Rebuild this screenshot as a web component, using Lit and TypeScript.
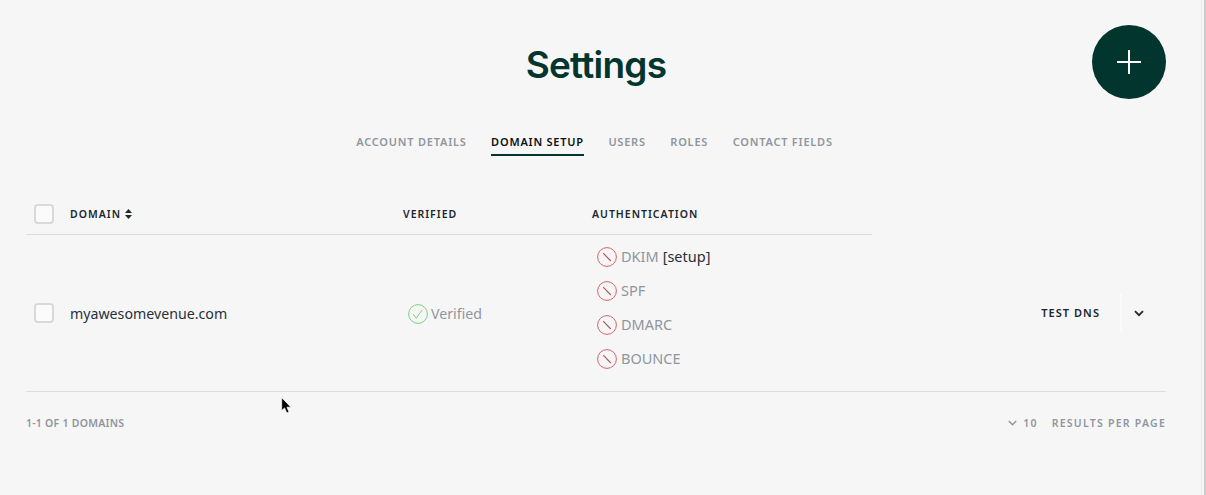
import { LitElement, html, css } from "lit";
import { customElement } from "lit/decorators.js";

const ban = html`<svg class="ico" viewBox="0 0 20 20" fill="none"><circle cx="10" cy="10" r="9.4" stroke="#d9636a" stroke-width="1"/><path d="M6.2 6.2 13.8 14" stroke="#b0555c" stroke-width="1.1"/></svg>`;
const check = html`<svg class="ico" viewBox="0 0 20 20" fill="none"><circle cx="10" cy="10" r="9.4" stroke="#7dd07f" stroke-width="1"/><path d="M5 10 8.3 14.2 14 6" stroke="#7dd07f" stroke-width="1"/></svg>`;

@customElement("app-root")
export class AppRoot extends LitElement {
  static styles = css`
    :host { display: block; height: 495px; background: #f6f6f6; position: relative; overflow: hidden;
      font-family: "Noto Sans", "Open Sans", sans-serif; color: #1c2530; }
    .edge { position: absolute; top: 0; right: 0; bottom: 0; width: 5px; box-sizing: border-box; background: #f7f7f7; border-left: 1px solid #ececec; border-right: 2px solid #cbcbcb; }
    .page { width: 1202px; box-sizing: border-box; padding: 0 36px 0 26px; display: flex; flex-direction: column; }
    h1 { margin: 0; padding-top: 42px; height: 93px; box-sizing: border-box; text-align: center; font-family: "Inter", sans-serif;
      font-weight: 600; font-size: 37px; line-height: 46px; letter-spacing: -0.75px; color: #03352f; }
    .fab { position: absolute; left: 1092px; top: 25px; width: 74px; height: 74px; border: 0; padding: 0; border-radius: 50%; background: #03352f;
      display: flex; align-items: center; justify-content: center; }
    .fab svg { width: 24px; height: 24px; }
    .tabs { display: flex; justify-content: center; gap: 24.5px; margin-right: 3px; padding-top: 41px; height: 61px; box-sizing: border-box; }
    .tab { font-size: 11px; font-weight: 600; letter-spacing: 0.78px; line-height: 16px; height: 22px; color: #8f979e; box-sizing: border-box; white-space: nowrap; }
    .tab.on { color: #0c1116; border-bottom: 2px solid #03352f; }
    .head, .row { display: grid; grid-template-columns: 44px 333px 189px 274px 1fr; align-items: center; }
    .head { width: 846px; grid-template-columns: 44px 333px 189px 280px; height: 41px; border-bottom: 1px solid #dedede; box-sizing: border-box; margin-top: 40px; }
    .th { font-size: 10.5px; font-weight: 600; letter-spacing: 1px; color: #20262e; display: flex; align-items: center; gap: 4px; white-space: nowrap; }
    .cb { width: 20px; height: 20px; margin-left: 8px; box-sizing: border-box; border: 2px solid #d9d9d9; border-radius: 4px; background: #fbfbfb; }
    .row { height: 157px; border-bottom: 1px solid #dedede; box-sizing: border-box; }
    .domain { font-size: 14.2px; color: #27303a; }
    .status { display: flex; align-items: center; gap: 3px; font-size: 14.2px; color: #8f979e; margin-left: 5px; }
    .auth { display: flex; flex-direction: column; gap: 10px; margin-left: 5px; padding-bottom: 12px; }
    .status.a { margin-left: 0; height: 24px; gap: 4px; font-size: 14.5px; }
    .setup { color: #27303a; }
    .ico { width: 20px; height: 20px; flex: none; margin-top: 2px; }
    .actions { display: flex; align-items: center; justify-content: flex-end; margin-right: 22px; }
    .test { font-size: 11px; font-weight: 600; letter-spacing: 1.05px; color: #20262e; padding-right: 20px; height: 38px; line-height: 38px; border-right: 2px solid #fbfbfb; white-space: nowrap; }
    .chev { width: 10px; height: 7px; margin-left: 12px; }
    .foot { display: flex; justify-content: space-between; align-items: center; padding-top: 24px; font-size: 10.5px; font-weight: 600; color: #8f979e; letter-spacing: 0.25px; }
    .per { display: flex; align-items: center; letter-spacing: 1.25px; }
    .per svg { width: 9px; height: 6px; margin-right: 6px; }
    .per b { font-weight: 600; margin-right: 14px; }
    .cursor { position: absolute; left: 281px; top: 397px; width: 12px; height: 17px; }
  `;

  render() {
    const tabs = ["ACCOUNT DETAILS", "DOMAIN SETUP", "USERS", "ROLES", "CONTACT FIELDS"];
    return html`
      <div class="page">
        <h1>Settings</h1>
        <nav class="tabs">
          ${tabs.map((t, i) => html`<div class="tab ${i === 1 ? "on" : ""}">${t}</div>`)}
        </nav>
        <div class="head">
          <div class="cb"></div>
          <div class="th">DOMAIN
            <svg width="7" height="10" viewBox="0 0 7 10" fill="#20262e"><path d="M3.5 0 7 4H0zM0 6h7L3.5 10z"/></svg>
          </div>
          <div class="th">VERIFIED</div>
          <div class="th">AUTHENTICATION</div>
        </div>
        <div class="row">
          <div class="cb"></div>
          <div class="domain">myawesomevenue.com</div>
          <div class="status">${check}Verified</div>
          <div class="auth">
            <div class="status a">${ban}DKIM <span class="setup">[setup]</span></div>
            <div class="status a">${ban}SPF</div>
            <div class="status a">${ban}DMARC</div>
            <div class="status a">${ban}BOUNCE</div>
          </div>
          <div class="actions">
            <div class="test">TEST DNS</div>
            <svg class="chev" viewBox="0 0 10 7" fill="none"><path d="M1 1.2 5 5.2 9 1.2" stroke="#20262e" stroke-width="1.8"/></svg>
          </div>
        </div>
        <div class="foot">
          <div>1-1 OF 1 DOMAINS</div>
          <div class="per">
            <svg viewBox="0 0 9 6" fill="none"><path d="M.8 1 4.5 4.7 8.2 1" stroke="#8f979e" stroke-width="1.4"/></svg>
            <b>10</b>RESULTS PER PAGE
          </div>
        </div>
      </div>
      <button class="fab" aria-label="Add">
        <svg viewBox="0 0 24 24" fill="none"><path d="M12 0V24M0 12H24" stroke="#fff" stroke-width="2"/></svg>
      </button>
      <div class="edge"></div>
      <svg class="cursor" viewBox="0 0 12 17"><path d="M.7.7V13.6L3.6 10.9 5.8 16 8 15 5.9 10.2H9.9z" fill="#000" stroke="#fff" stroke-width=".7"/></svg>
    `;
  }
}
